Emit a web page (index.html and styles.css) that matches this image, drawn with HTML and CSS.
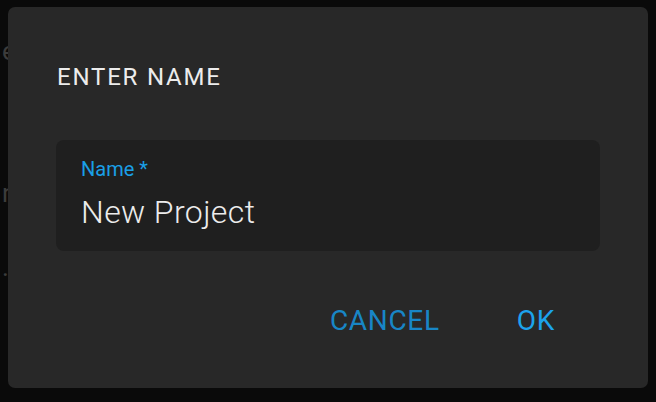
FILE: index.html
```html
<!DOCTYPE html>
<html>
<head>
  <title>Enter Name</title>
  <link rel="stylesheet" href="styles.css">
</head>
<body>
  <div class="page">
    <p class="line line-one">everything</p>
    <p class="line line-two">new</p>
    <p class="line line-three">.</p>
  </div>

  <div class="backdrop">
    <div class="dialog">
      <h2 class="dialog-title">ENTER NAME</h2>
      <div class="field">
        <label for="name">Name *</label>
        <input type="text" id="name" value="New Project">
      </div>
      <div class="actions">
        <button class="btn btn-cancel">CANCEL</button>
        <button class="btn btn-ok">OK</button>
      </div>
    </div>
  </div>
</body>
</html>
```

FILE: styles.css
```css
* {
  box-sizing: border-box;
}
body {
  margin: 0;
  background-color: #0a0a0a;
  font-family: Roboto, "Liberation Sans", sans-serif;
  overflow: hidden;
}
.page {
  padding-left: 2px;
}
.line {
  margin: 0;
  color: #3c3c3c;
  font-size: 26px;
}
.line-one {
  padding-top: 36px;
}
.line-two {
  padding-top: 112px;
}
.line-three {
  padding-top: 44px;
}
.backdrop {
  position: fixed;
  left: 0;
  top: 0;
  width: 656px;
  height: 402px;
  padding: 7px 8px 14px 8px;
}
.dialog {
  width: 640px;
  height: 381px;
  background-color: #282828;
  border-radius: 7px;
  padding: 56px 48px 0 48px;
}
.dialog-title {
  margin: 0 0 0 1px;
  color: #ececec;
  font-size: 24px;
  font-weight: 400;
  letter-spacing: 1.8px;
  line-height: 28px;
}
.field {
  margin-top: 49px;
  background-color: #1f1f1f;
  border-radius: 8px;
  height: 111px;
  padding: 17px 24px 0 25px;
}
.field label {
  display: block;
  color: #1a9fe6;
  font-size: 20px;
  line-height: 24px;
}
.field input {
  display: block;
  width: 100%;
  margin-top: 12px;
  background: none;
  border: none;
  outline: none;
  padding: 0;
  color: #ececec;
  font-family: Roboto, "Liberation Sans", sans-serif;
  font-size: 32px;
  font-weight: 300;
  letter-spacing: 0.4px;
  line-height: 38px;
}
.actions {
  display: flex;
  justify-content: flex-end;
  gap: 77px;
  margin-top: 53px;
  padding-right: 45px;
}
.btn {
  background: none;
  border: none;
  padding: 0;
  font-family: Roboto, "Liberation Sans", sans-serif;
  font-size: 28px;
  letter-spacing: 0.7px;
  line-height: 34px;
}
.btn-cancel {
  color: #1886c6;
}
.btn-ok {
  color: #1ca3ec;
}
```
